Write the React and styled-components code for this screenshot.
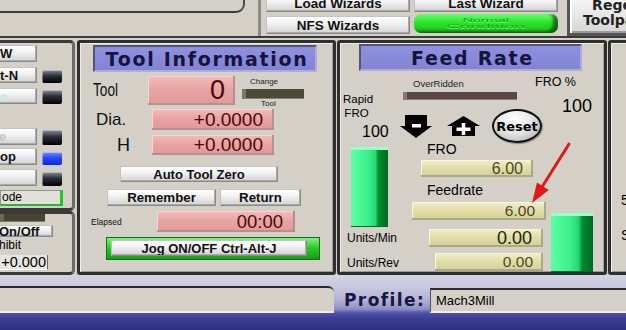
import React from "react";
import styled, { createGlobalStyle } from "styled-components";

const GlobalStyle = createGlobalStyle`
  html, body { margin: 0; padding: 0; background: #d4d0c8; }
  * { box-sizing: border-box; }
`;

const Screen = styled.div`
  position: relative;
  width: 626px;
  height: 330px;
  overflow: hidden;
  background: #d4d0c8;
  font-family: "Liberation Sans", Arial, sans-serif;
  color: #000;
  display: flex;
  flex-direction: column;
`;

/* ---------- top strip ---------- */
const TopStrip = styled.div`
  display: flex;
  align-items: flex-start;
  height: 38px;
  flex-shrink: 0;
  border-bottom: 2px solid #3a3a3a;
  margin-bottom: 2px;
`;

const TopLeft = styled.div`
  width: 261px;
  height: 36px;
  border-right: 3px solid #8a8a86;
  flex-shrink: 0;
`;

const InsetBox = styled.div`
  width: 245px;
  height: 13px;
  border-bottom: 2px solid #3c3c3c;
  border-right: 2px solid #4a4a4a;
  border-bottom-right-radius: 9px;
`;

const WizardGrid = styled.div`
  margin-left: 5px;
  margin-top: -5px;
  display: grid;
  grid-template-columns: 144px 144px;
  grid-template-rows: 17px 19px;
  column-gap: 4px;
  row-gap: 3px;
  flex-shrink: 0;
`;

const Btn = styled.div`
  width: ${(p) => (p.$w ? `${p.$w}px` : "auto")};
  height: ${(p) => (p.$h ? `${p.$h}px` : "auto")};
  margin-left: ${(p) => p.$ml || 0}px;
  margin-top: ${(p) => p.$mt || 0}px;
  padding-left: ${(p) => p.$pl || 0}px;
  display: flex;
  align-items: center;
  justify-content: ${(p) => p.$align || "center"};
  background: linear-gradient(to bottom, #ffffff 0%, #f2f2f2 40%, #d2d2d2 100%);
  border: 1px solid #8a8a8a;
  border-top-color: #c4c4c4;
  border-left-color: #c4c4c4;
  box-shadow: inset -1px -1px 0 #aaaaaa;
  font-weight: bold;
  font-size: ${(p) => p.$fs || 13}px;
  color: ${(p) => p.$color || "#111"};
  white-space: nowrap;
  overflow: hidden;
  flex-shrink: 0;
  flex-grow: ${(p) => (p.$grow ? 1 : 0)};
`;

const StatusLamp = styled.div`
  margin-top: -1px;
  height: 19px;
  border-radius: 7px;
  background: linear-gradient(to bottom, #6cff6c 0%, #30e630 40%, #14c414 100%);
  box-shadow: inset -5px -2px 3px rgba(0, 0, 0, 0.5);
  display: flex;
  flex-direction: column;
  align-items: center;
  justify-content: center;
  padding-bottom: 2px;
  overflow: hidden;
`;

const LampText = styled.span`
  display: block;
  font-size: 6px;
  line-height: 6px;
  color: #1c9c1c;
  transform: scaleX(${(p) => p.$sx});
  text-shadow: 0 1px 0 #80ff80;
`;

const RegenButton = styled.div`
  margin-left: 9px;
  margin-top: -5px;
  width: 100px;
  height: 41px;
  flex-shrink: 0;
  border: 3px solid #565656;
  background: linear-gradient(to bottom, #f6f6f6, #d6d6d6);
  box-shadow: inset 2px 2px 0 #ffffff, inset -2px -2px 0 #9a9a9a;
  display: flex;
  flex-direction: column;
  align-items: center;
  justify-content: center;
  padding-bottom: 6px;
  font-family: "DejaVu Sans", Verdana, sans-serif;
  font-weight: bold;
  font-size: 14px;
  line-height: 15px;
  color: #222;
  white-space: nowrap;
`;

/* ---------- middle panels ---------- */
const Middle = styled.div`
  display: flex;
  height: 235px;
  flex-shrink: 0;
`;

const LeftCol = styled.div`
  width: 75px;
  margin-right: 2px;
  display: flex;
  flex-direction: column;
  flex-shrink: 0;
`;

const LeftPanel = styled.div`
  height: ${(p) => p.$h}px;
  border: 3px solid #3a3a3a;
  border-left: none;
  border-right-color: #6a6a6a;
  border-radius: 0 5px 5px 0;
  display: flex;
  flex-direction: column;
  align-items: flex-start;
  overflow: hidden;
`;

const LeftRow = styled.div`
  display: flex;
  align-items: flex-end;
  gap: 5px;
  height: ${(p) => p.$h}px;
  margin-top: ${(p) => p.$mt}px;
`;

const LED = styled.div`
  width: 20px;
  height: ${(p) => p.$h}px;
  border-radius: 2px;
  background: ${(p) =>
    p.$blue
      ? "linear-gradient(to bottom, #7a90ff 0%, #2a48ff 45%, #0828e8 100%)"
      : "linear-gradient(to bottom, #8a8e9c 0%, #2c2e3a 45%, #000000 100%)"};
  box-shadow: inset 1px 1px 0 rgba(255, 255, 255, 0.4);
`;

const ModeField = styled.div`
  margin-top: 4px;
  width: 63px;
  height: 16px;
  background: #e2e0d8;
  border: 1px solid #8a9a8a;
  border-right: 3px solid #1ccc1c;
  border-bottom: 2px solid #2cb42c;
  font-size: 12px;
  line-height: 13px;
  padding-left: 1px;
`;

const DarkBar = styled.div`
  width: ${(p) => p.$w}px;
  height: ${(p) => p.$h}px;
  margin-top: ${(p) => p.$mt || 0}px;
  margin-left: ${(p) => p.$ml || 0}px;
  background: ${(p) => p.$bg || "#45452f"};
  box-shadow: inset 4px 0 0 ${(p) => p.$hl || "#6a6a56"}, inset 0 -1px 0 rgba(255,255,255,0.3);
  flex-shrink: 0;
`;

const SmallText = styled.div`
  font-size: ${(p) => p.$fs}px;
  line-height: ${(p) => p.$lh}px;
  margin-left: ${(p) => p.$ml || 0}px;
  margin-top: ${(p) => p.$mt || 0}px;
  width: ${(p) => (p.$w ? `${p.$w}px` : "auto")};
  text-align: ${(p) => (p.$center ? "center" : "left")};
  color: ${(p) => p.$color || "#000"};
  white-space: nowrap;
`;

const LightField = styled.div`
  margin-top: 3px;
  margin-left: -3px;
  width: 51px;
  height: 15px;
  background: #e6e6e0;
  border-right: 1px solid #6a6a6a;
  border-bottom: 1px solid #ffffff;
  font-size: 14.5px;
  line-height: 15px;
  text-align: right;
  padding-right: 1px;
`;

const Panel = styled.div`
  width: ${(p) => (p.$w ? `${p.$w}px` : "auto")};
  flex: ${(p) => (p.$w ? "0 0 auto" : "1")};
  margin-left: ${(p) => p.$ml || 0}px;
  border: 3px solid #2e2e2e;
  border-radius: 3px;
  box-shadow: inset 1px 1px 0 #efefea, inset -1px -1px 0 #9c9c98;
  display: flex;
  flex-direction: column;
  align-items: flex-start;
  overflow: visible;
`;

const TitleBar = styled.div`
  margin-left: ${(p) => p.$ml}px;
  margin-top: ${(p) => p.$mt}px;
  width: ${(p) => p.$w}px;
  height: 27px;
  flex-shrink: 0;
  background: linear-gradient(to bottom, #9090e0, #8484d6);
  border: 2px solid;
  border-color: #54546c #aeaed4 #aeaed4 #54546c;
  display: flex;
  align-items: center;
  justify-content: center;
  padding-left: 4px;
  font-family: "DejaVu Sans", Verdana, sans-serif;
  font-weight: bold;
  font-size: 19px;
  letter-spacing: 1.7px;
  color: #15153c;
  white-space: nowrap;
`;

const DroRow = styled.div`
  display: flex;
  align-items: center;
  height: ${(p) => p.$h}px;
  margin-top: ${(p) => p.$mt}px;
  margin-left: ${(p) => p.$ml || 0}px;
  flex-shrink: 0;
`;

const Label = styled.div`
  width: ${(p) => p.$w}px;
  padding-left: ${(p) => p.$pl}px;
  font-size: ${(p) => p.$fs}px;
  color: #111;
  white-space: nowrap;
  flex-shrink: 0;
`;

const Narrow = styled.span`
  display: inline-block;
  transform: scaleX(0.76);
  transform-origin: left center;
`;

const PinkDRO = styled.div`
  width: ${(p) => p.$w}px;
  height: ${(p) => p.$h}px;
  flex-shrink: 0;
  display: flex;
  align-items: center;
  justify-content: flex-end;
  padding-right: ${(p) => p.$pr}px;
  font-size: ${(p) => p.$fs}px;
  color: #4c0808;
  background: linear-gradient(to bottom, #f4bcbc 0%, #e8a4a4 45%, #df9898 100%);
  box-shadow: inset -2px -2px 0 #b49090, inset 1px 1px 0 #f8d4d4;
`;

const ChangeWidget = styled.div`
  margin-left: 7px;
  width: 62px;
  align-self: flex-start;
  display: flex;
  flex-direction: column;
  align-items: flex-start;
`;

const ButtonRow = styled.div`
  display: flex;
  gap: ${(p) => p.$gap}px;
  margin-top: ${(p) => p.$mt}px;
  margin-left: ${(p) => p.$ml}px;
`;

const JogFrame = styled.div`
  margin: 5px 0 0 26px;
  width: 214px;
  height: 23px;
  display: flex;
  padding: 2px 12px 3px 4px;
  background: linear-gradient(to bottom, #80f080 0%, #26c826 50%, #12a012 100%);
  border: 1px solid #1a6a1a;
`;

const Section = styled.div`
  display: flex;
  height: ${(p) => p.$h}px;
  flex-shrink: 0;
  align-self: stretch;
`;

const Col = styled.div`
  width: ${(p) => (p.$w ? `${p.$w}px` : "auto")};
  padding-left: ${(p) => p.$pl || 0}px;
  display: flex;
  flex-direction: column;
  align-items: flex-start;
  flex-shrink: 0;
`;

const ArrowRow = styled.div`
  display: flex;
  align-items: center;
  height: 34px;
  margin-top: 9px;
`;

const ArrowIcon = styled.svg`
  display: block;
  margin-left: ${(p) => p.$ml || 0}px;
  flex-shrink: 0;
`;

const ResetBtn = styled.div`
  margin-left: 12px;
  width: 50px;
  height: 34px;
  flex-shrink: 0;
  border-radius: 50%;
  border: 2px solid #111;
  background: radial-gradient(ellipse at 45% 30%, #ffffff 0%, #ececec 40%, #a4a4a4 100%);
  box-shadow: 1px 1px 1px rgba(0, 0, 0, 0.35);
  display: flex;
  align-items: center;
  justify-content: center;
  font-family: "DejaVu Sans", Verdana, sans-serif;
  font-weight: bold;
  font-size: 13px;
  color: #000;
`;

const GreenBar = styled.div`
  width: ${(p) => p.$w}px;
  height: ${(p) => p.$h}px;
  margin-left: ${(p) => p.$ml || 0}px;
  margin-top: ${(p) => p.$mt || 0}px;
  align-self: ${(p) => (p.$end ? "flex-end" : "auto")};
  flex-shrink: 0;
  background: linear-gradient(to right, #5affa2 0%, #3cf08c 45%, #26d676 66%, #008c2e 74%, #006a20 100%);
  box-shadow: inset 0 3px 0 #9cffc8, inset 0 -1px 0 #007020;
`;

const KhakiDRO = styled.div`
  width: ${(p) => p.$w}px;
  height: ${(p) => p.$h}px;
  margin-left: ${(p) => p.$ml}px;
  margin-top: ${(p) => p.$mt || 0}px;
  flex-shrink: 0;
  display: flex;
  align-items: center;
  justify-content: flex-end;
  padding-right: ${(p) => p.$pr}px;
  font-size: ${(p) => p.$fs}px;
  color: ${(p) => (p.$dark ? "#24220c" : "#4e4824")};
  background: linear-gradient(to bottom, #f2f0cc 0%, #e2dea8 45%, #d2ce96 100%);
  box-shadow: inset -2px -2px 0 #aeaa80, inset 1px 1px 0 #f8f6dc;
`;

const EdgeText = styled.div`
  margin-left: 10px;
  margin-top: ${(p) => p.$mt}px;
  font-size: 14px;
  line-height: 14px;
`;

/* ---------- bottom strip ---------- */
const BottomStrip = styled.div`
  flex: 1;
  display: flex;
  align-items: flex-start;
  background: linear-gradient(
    to bottom,
    #d4d4e2 0%,
    #c8c8de 22%,
    #b2b2d8 45%,
    #8e8ec8 62%,
    #5050a8 69%,
    #3c3c96 80%,
    #2e2e80 100%
  );
`;

const StatusField = styled.div`
  width: 334px;
  height: 27px;
  margin-top: 11px;
  background: #d4d0c8;
  border-top: 2px solid #2a2a2a;
  border-bottom: 2px solid #ececf4;
  border-top-right-radius: 6px;
  flex-shrink: 0;
`;

const ProfileLabel = styled.div`
  width: 96px;
  height: 27px;
  margin-top: 11px;
  padding-left: 10px;
  display: flex;
  align-items: center;
  font-family: "DejaVu Sans", Verdana, sans-serif;
  font-weight: bold;
  font-size: 17px;
  letter-spacing: 1.4px;
  color: #18183e;
  flex-shrink: 0;
`;

const ProfileInput = styled.div`
  flex: 1;
  height: 25px;
  margin-top: 13px;
  background: #d4d0c8;
  border-top: 2px solid #2a2a2a;
  border-left: 1px solid #555;
  border-bottom: 2px solid #ececf4;
  padding-left: 5px;
  display: flex;
  align-items: center;
  font-size: 13px;
  color: #000;
`;

const Overlay = styled.svg`
  position: absolute;
  left: 0;
  top: 0;
  pointer-events: none;
`;

export default function App() {
  return (
    <>
      <GlobalStyle />
      <Screen>
        <TopStrip>
          <TopLeft>
            <InsetBox />
          </TopLeft>
          <WizardGrid>
            <Btn $fs={13.5}>Load Wizards</Btn>
            <Btn $fs={13.5}>Last Wizard</Btn>
            <Btn $fs={13.5} $mt={1} $h={18}>NFS Wizards</Btn>
            <StatusLamp>
              <LampText $sx={2.4}>Normal</LampText>
              <LampText $sx={3.1}>Condition</LampText>
            </StatusLamp>
          </WizardGrid>
          <RegenButton>
            <span>Regen</span>
            <span>Toolpath</span>
          </RegenButton>
        </TopStrip>

        <Middle>
          <LeftCol>
            <LeftPanel $h={171}>
              <Btn $w={40} $h={17} $ml={-3} $mt={2} $align="flex-start" $pl={2}>W</Btn>
              <LeftRow $h={16} $mt={5}>
                <Btn $w={40} $h={16} $ml={-3} $align="flex-start" $pl={2}>t-N</Btn>
                <LED $h={13} />
              </LeftRow>
              <LeftRow $h={16} $mt={5}>
                <Btn $w={40} $h={16} $ml={-3} $align="flex-start" $pl={2} $color="#c8e4e4">e</Btn>
                <LED $h={14} />
              </LeftRow>
              <LeftRow $h={17} $mt={24}>
                <Btn $w={40} $h={17} $ml={-3} $align="flex-start" $pl={1} $color="#c4c4c4">e</Btn>
                <LED $h={15} />
              </LeftRow>
              <LeftRow $h={17} $mt={3}>
                <Btn $w={40} $h={17} $ml={-3} $align="flex-start" $pl={2}>op</Btn>
                <LED $h={13} $blue />
              </LeftRow>
              <LeftRow $h={17} $mt={4}>
                <Btn $w={40} $h={17} $ml={-3} />
                <LED $h={14} />
              </LeftRow>
              <ModeField>ode</ModeField>
            </LeftPanel>
            <LeftPanel $h={64}>
              <DarkBar $w={45} $h={8} $mt={0} />
              <Btn $w={56} $h={12} $ml={-3} $mt={3} $align="flex-start" $pl={1}>On/Off</Btn>
              <SmallText $fs={12} $lh={14} $ml={-1} $mt={1}>hibit</SmallText>
              <LightField>+0.000</LightField>
            </LeftPanel>
          </LeftCol>

          <Panel $w={259}>
            <TitleBar $ml={13} $mt={2} $w={224}>Tool Information</TitleBar>
            <DroRow $mt={4} $h={29}>
              <Label $w={68} $pl={13} $fs={18}>
                <Narrow>Tool</Narrow>
              </Label>
              <PinkDRO $w={87} $h={29} $fs={27} $pr={10}>0</PinkDRO>
              <ChangeWidget>
                <SmallText $fs={8} $lh={11} $ml={8} $color="#222">Change</SmallText>
                <DarkBar $w={62} $h={10} $mt={2} $bg="#4a4a3a" $hl="#787866" />
                <SmallText $fs={8} $lh={10} $ml={19} $color="#222">Tool</SmallText>
              </ChangeWidget>
            </DroRow>
            <DroRow $mt={4} $h={21}>
              <Label $w={72} $pl={16} $fs={17}>Dia.</Label>
              <PinkDRO $w={122} $h={21} $fs={19} $pr={11}>+0.0000</PinkDRO>
            </DroRow>
            <DroRow $mt={5} $h={20}>
              <Label $w={72} $pl={37} $fs={18}>H</Label>
              <PinkDRO $w={122} $h={20} $fs={19} $pr={11}>+0.0000</PinkDRO>
            </DroRow>
            <Btn $w={158} $h={16} $ml={40} $mt={11}>Auto Tool Zero</Btn>
            <ButtonRow $gap={4} $mt={7} $ml={27}>
              <Btn $w={109} $h={17} $fs={13.3}>Remember</Btn>
              <Btn $w={81} $h={17} $fs={13.3}>Return</Btn>
            </ButtonRow>
            <DroRow $mt={5} $h={21}>
              <Label $w={77} $pl={11} $fs={8.5}>Elapsed</Label>
              <PinkDRO $w={138} $h={21} $fs={18.5} $pr={12}>00:00</PinkDRO>
            </DroRow>
            <JogFrame>
              <Btn $grow>Jog ON/OFF Ctrl-Alt-J</Btn>
            </JogFrame>
          </Panel>

          <Panel $w={270} $ml={1}>
            <TitleBar $ml={19} $mt={1} $w={223}>Feed Rate</TitleBar>
            <Section $h={72}>
              <Col $w={60} $pl={3}>
                <SmallText $fs={11.5} $lh={14} $mt={21} $w={27} $center>Rapid</SmallText>
                <SmallText $fs={11.5} $lh={14} $w={27} $center>FRO</SmallText>
                <SmallText $fs={16} $lh={20} $mt={2} $ml={19}>100</SmallText>
              </Col>
              <Col $w={135}>
                <SmallText $fs={9.5} $lh={12} $mt={7} $ml={13} $color="#222">OverRidden</SmallText>
                <DarkBar $w={114} $h={8} $mt={2} $ml={3} $bg="#5a4444" $hl="#8c7474" />
                <ArrowRow>
                  <ArrowIcon width="32" height="23" viewBox="0 0 32 23">
                    <path d="M5 0H27V11H32L16 23L0 11H5Z" fill="#000" />
                    <rect x="12" y="9" width="9" height="3.5" fill="#fff" />
                  </ArrowIcon>
                  <ArrowIcon $ml={15} width="33" height="20" viewBox="0 0 33 20">
                    <path d="M16.5 0L33 10H28V20H5V10H0Z" fill="#000" />
                    <rect x="9.5" y="11.5" width="14" height="3.5" fill="#fff" />
                    <rect x="14.75" y="7" width="3.5" height="12" fill="#fff" />
                  </ArrowIcon>
                  <ResetBtn>Reset</ResetBtn>
                </ArrowRow>
              </Col>
              <Col>
                <SmallText $fs={12.5} $lh={14} $mt={4}>FRO %</SmallText>
                <SmallText $fs={18} $lh={20} $mt={7} $ml={27}>100</SmallText>
              </Col>
            </Section>
            <Section $h={129}>
              <Col $w={60} $pl={3}>
                <GreenBar $w={37} $h={80} $ml={8} $mt={4} />
                <SmallText $fs={12} $lh={14} $ml={4} $mt={4}>Units/Min</SmallText>
                <SmallText $fs={12} $lh={14} $ml={4} $mt={11}>Units/Rev</SmallText>
              </Col>
              <Col $w={146}>
                <SmallText $fs={14} $lh={12} $ml={27}>FRO</SmallText>
                <KhakiDRO $w={112} $h={17} $ml={21} $mt={5} $fs={16} $pr={10}>6.00</KhakiDRO>
                <SmallText $fs={14} $lh={14} $ml={27} $mt={6}>Feedrate</SmallText>
                <KhakiDRO $w={134} $h={18} $ml={12} $mt={5} $fs={15.5} $pr={11}>6.00</KhakiDRO>
                <KhakiDRO $w={114} $h={18} $ml={29} $mt={9} $fs={18} $pr={11} $dark>0.00</KhakiDRO>
                <KhakiDRO $w={108} $h={18} $ml={35} $mt={6} $fs={15.5} $pr={10}>0.00</KhakiDRO>
              </Col>
              <GreenBar $w={42} $h={59} $ml={5} $end />
            </Section>
          </Panel>

          <Panel $ml={1}>
            <EdgeText $mt={150}>5</EdgeText>
            <EdgeText $mt={21}>S</EdgeText>
          </Panel>
        </Middle>

        <BottomStrip>
          <StatusField />
          <ProfileLabel>Profile:</ProfileLabel>
          <ProfileInput>Mach3Mill</ProfileInput>
        </BottomStrip>

        <Overlay width="626" height="330" viewBox="0 0 626 330">
          <line x1="569" y1="144" x2="542" y2="187" stroke="#e01818" strokeWidth="3" strokeLinecap="round" />
          <path d="M532 203L548.8 190L537 182.4Z" fill="#e01818" />
        </Overlay>
      </Screen>
    </>
  );
}
